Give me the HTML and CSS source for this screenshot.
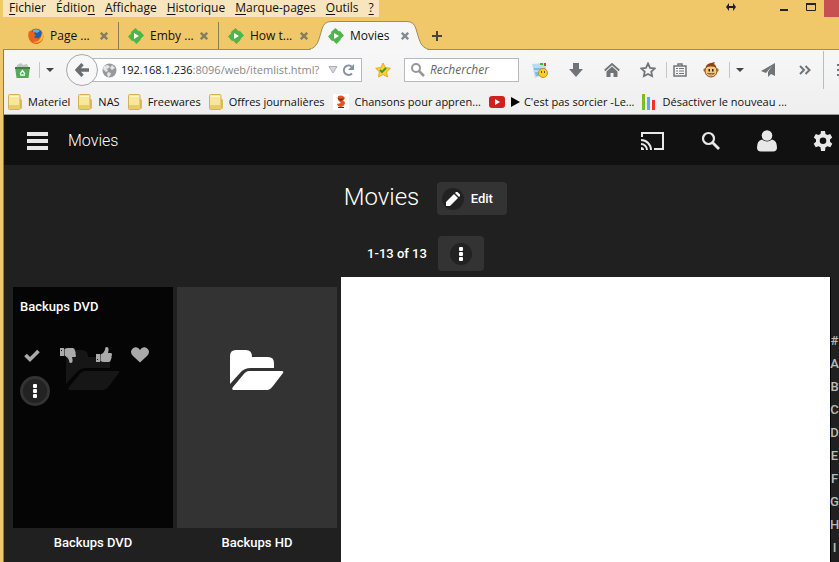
FILE: index.html
```
<!DOCTYPE html>
<html lang="fr">
<head>
  <meta charset="UTF-8">
  <meta name="viewport" content="width=device-width, initial-scale=1.0">
  <title>Movies</title>
  <link rel="stylesheet" href="styles.css">
</head>
<body>
  <svg class="defs" aria-hidden="true">
    <symbol id="emby" viewBox="0 0 16 16"><path fill="#4db648" d="M7.500 0L11 3.500l.8-.8L16 7.500l-3.500 3.500.2.800L8.500 16 5 12.500l-.8.8L0 8.500 3.500 5l-.8-.8z"/><path fill="#fff" d="M6 5l5 3-5 3z"/></symbol>
    <symbol id="cross" viewBox="0 0 8 8"><path stroke="currentColor" stroke-width="2.4" d="M.8.8l6.4 6.4M7.2.8L.8 7.2"/></symbol>
    <symbol id="folder-small" viewBox="0 0 14 16"><path fill="#dcbc4c" d="M11 5h1.500q1.500 0 1.500 1.500v7q0 1.500-2 1.500h-1z"/><path fill="#f7e79a" stroke="#d3b254" d="M.5 1.500q0-1 1-1h9.500q1 0 1 1v13q0 1-1 1h-9.500q-1 0-1-1z"/><path fill="#e8cd66" d="M1 11h10.500v4h-10.500z"/><path fill="#fff6c4" d="M2 2h9v1h-9z"/></symbol>
    <symbol id="folder" viewBox="0 0 54 40"><path d="M0 34V6Q0 0 6 0h10q6 0 6 7h16q6 0 6 6v5H21q-7 0-11 5z"/><path d="M19 21h33q2 0 1 2L43 36q-3 4-6 4H4q-3 0-1-3l10-12q3-4 6-4z"/></symbol>
    <symbol id="dots" viewBox="0 0 4 14"><rect width="4" height="4" rx="1" fill="#fff"/><rect y="5" width="4" height="4" rx="1" fill="#fff"/><rect y="10" width="4" height="4" rx="1" fill="#fff"/></symbol>
    <symbol id="thumb" viewBox="0 0 16 16"><path d="M0 7h4v8H0zM4.500 7.500Q8 6 9 3q0-3 1.500-3Q13 0 12.500 3.500L12 6h3q1 0 1 1.500 0 1-.6 1.500.6 1 0 2.300-.2 1-.6 1.400 0 2-1.800 2.300H8q-2 0-3.500-1z"/><path fill="#111" d="M1 12h1v1H1z"/></symbol>
  </svg>

  <header class="titlebar">
    <nav class="menubar">
      <button><u>F</u>ichier</button>
      <button>Éditio<u>n</u></button>
      <button><u>A</u>ffichage</button>
      <button><u>H</u>istorique</button>
      <button><u>M</u>arque-pages</button>
      <button><u>O</u>utils</button>
      <button><u>?</u></button>
    </nav>
    <div class="window-buttons">
      <svg class="resize" width="10" height="8" viewBox="0 0 10 8"><path fill="#222" d="M0 4l3-4v3h4V0l3 4-3 4V5H3v3z"/></svg>
      <button aria-label="Réduire"><svg class="minimize" width="8" height="2"><path fill="#222" d="M0 0h8v2H0z"/></svg></button>
      <button aria-label="Agrandir"><svg width="10" height="8"><path fill="none" stroke="#222" d="M.5 1v6.500h9V1"/><path fill="#222" d="M0 0h10v2H0z"/></svg></button>
      <button class="window-close" aria-label="Fermer"></button>
    </div>
  </header>

  <div class="tabs">
    <div class="tab">
      <svg class="favicon" viewBox="0 0 16 16"><circle cx="8" cy="8" r="7.500" fill="#e66a17"/><circle cx="8.500" cy="6.500" r="5.500" fill="#245fa6"/><path fill="#58b4e4" d="M5 2q4-2 7 1l-3 2-2-1-2 1z"/><path fill="#e8641b" d="M1 3l2 1q2-1 4 0L6 6l2 1-2 2q2 2 5 1 3-2 3-5 3 5-1 9-5 4-10 0Q-1 10 1 3z"/><path fill="#fbbd31" d="M14 4q3 5-1 9-4 3-8 1 5 0 7-3t2-7z"/></svg>
      <a href="#">Page ...</a>
      <button aria-label="Fermer l'onglet"><svg width="8" height="8"><use href="#cross"/></svg></button>
    </div>
    <div class="tab">
      <svg class="favicon"><use href="#emby"/></svg>
      <a href="#">Emby ...</a>
      <button aria-label="Fermer l'onglet"><svg width="8" height="8"><use href="#cross"/></svg></button>
    </div>
    <div class="tab">
      <svg class="favicon"><use href="#emby"/></svg>
      <a href="#">How t...</a>
      <button aria-label="Fermer l'onglet"><svg width="8" height="8"><use href="#cross"/></svg></button>
    </div>
    <div class="tab active">
      <svg class="tab-shape" viewBox="0 0 120 29"><path fill="#f6f6f6" stroke="#a48b4e" d="M-1 28.500Q7 28 10 18L13 8Q15 .5 22 .5h76q7 0 9 7.500l3 10q3 10 11 10.500"/><path stroke="#f6f6f6" stroke-width="2" d="M2 29h116"/></svg>
      <svg class="favicon"><use href="#emby"/></svg>
      <a href="#">Movies</a>
      <button aria-label="Fermer l'onglet"><svg width="8" height="8"><use href="#cross"/></svg></button>
    </div>
    <button class="new-tab" aria-label="Nouvel onglet"><svg width="10" height="10"><path fill="#444" d="M4 0h2v4h4v2H6v4H4V6H0V4h4z"/></svg></button>
  </div>

  <div class="browser">
    <div class="toolbar">
      <button class="tool recycle" aria-label="Nettoyer"><svg width="15" height="15" viewBox="0 0 15 15"><path fill="#bcc7bd" d="M2 2l4-2 2 2 4-1 2 4H1z"/><path fill="#55a85c" d="M0 4h15l-1.500 11h-12z"/><path fill="#3c8145" d="M0 4h15v2H0z"/><path fill="none" stroke="#e9ffe9" stroke-width="1.300" d="M5 11l2.500-3.500L10 11M5 12h5"/></svg></button>
      <i class="divider"></i>
      <button class="caret" aria-label="Options"><svg width="8" height="4"><path fill="#444" d="M0 0h8L4 4z"/></svg></button>
      <div class="location">
        <button class="back" aria-label="Précédent"><svg width="14" height="14"><path fill="none" stroke="#6b6e71" stroke-width="3.400" d="M7.500 1.200L2 7l5.500 5.800M2 7h12"/></svg></button>
        <div class="urlbar">
          <svg width="15" height="15" viewBox="0 0 15 15"><circle cx="7.500" cy="7.500" r="7" fill="#979a9c"/><path fill="#e4e5e6" d="M2 3l4-1 2 2-3 2 1 2-2 1-3-3zM10 2l3 3-3 2-2-2zM6 9l3 1-1 3-2 1-1-3z"/></svg>
          <a class="url" href="#"><b>192.168.1.236</b>:8096/web/itemlist.html?</a>
          <button aria-label="Historique"><svg width="10" height="8"><path fill="#d6d9dc" stroke="#a9b0b6" d="M1 .5h8L5 7z"/></svg></button>
          <button aria-label="Actualiser"><svg width="13" height="12"><path fill="none" stroke="#8491a0" stroke-width="2" d="M10 9.500A4.700 4.700 0 1 1 9.500 2.500"/><path fill="#8491a0" d="M12 0v6H6z"/></svg></button>
        </div>
      </div>
      <button class="tool bookmark" aria-label="Favori"><svg width="16" height="16" viewBox="0 0 16 16"><path fill="#ffd42e" stroke="#efa625" d="M8 1l2.200 4.600 5.100.7-3.700 3.500.9 5.100L8 12.500l-4.500 2.400.9-5.100L.7 6.300l5.100-.7z"/><path fill="none" stroke="#3c9d39" stroke-width="2" d="M5 8l2 2 4-4"/></svg></button>
      <label class="search">
        <svg width="14" height="14"><circle cx="5" cy="5" r="4" fill="none" stroke="#979797" stroke-width="2"/><path stroke="#979797" stroke-width="2.500" d="M8 8l5 5"/></svg>
        <input type="text" placeholder="Rechercher" aria-label="Rechercher">
      </label>
      <button class="tool first" aria-label="Images"><svg width="16" height="15"><path fill="#b9dcf4" d="M0 1l13-1 2 10-12 5z"/><path fill="#7fbbe6" d="M2 5l11 0v2H2zM3 9h6v4H4z"/><path fill="#e63c2d" d="M12 0h2v3h-2z"/><path fill="#46b53e" d="M8 0h3v2H8z"/><circle cx="11" cy="10" r="4.500" fill="#f4cf2a" stroke="#c69616"/><path fill="#6b5212" d="M9 8h1v2H9zM12 8h1v2h-1z"/></svg></button>
      <button class="tool" aria-label="Téléchargements"><svg width="14" height="14"><path fill="#717477" d="M4 0h6v6h4l-7 8-7-8h4z"/></svg></button>
      <button class="tool" aria-label="Accueil"><svg width="16" height="14"><path fill="none" stroke="#717477" stroke-width="1.800" d="M.7 7.500L8 1l7.300 6.500"/><path fill="#717477" d="M8 3.500l5.500 5V14h-4v-4h-3v4h-4V8.500z"/></svg></button>
      <button class="tool" aria-label="Marquer cette page"><svg width="16" height="16"><path fill="none" stroke="#717477" stroke-width="1.800" d="M8 1.500l2 4.300 4.700.6-3.400 3.200.8 4.600L8 12l-4.100 2.200.8-4.600-3.400-3.200 4.700-.6z"/></svg></button>
      <i class="divider"></i>
      <button class="tool narrow" aria-label="Liste des marque-pages"><svg width="14" height="14"><path fill="none" stroke="#717477" stroke-width="1.500" d="M1 3h12v10H1zM5 2.500V1h4v1.500"/><path fill="#717477" d="M3 5h2v1H3zM6 5h5v1H6zM3 7.500h2v1H3zM6 7.500h5v1H6zM3 10h2v1H3zM6 10h5v1H6z"/></svg></button>
      <button class="tool" aria-label="Greasemonkey"><svg width="16" height="16"><circle cx="2" cy="8" r="1.700" fill="#bd7420"/><circle cx="14" cy="8" r="1.700" fill="#bd7420"/><ellipse cx="8" cy="9" rx="6" ry="6" fill="#f3c77e" stroke="#8a4c16"/><path fill="#8a4310" d="M2.500 5.500q1-4 5.500-4.500l4-1-1 2q2 1 2.500 3.500-3-1.500-5.500-1-3-.5-5.500 1z"/><path fill="#25211b" d="M5.500 7H7v2.500H5.500zM9 7h1.500v2.500H9z"/><path fill="#fff2cc" stroke="#8a4c16" stroke-width=".8" d="M4.500 11.500h7q-3 3-7 0z"/></svg></button>
      <i class="divider"></i>
      <button class="caret" aria-label="Options"><svg width="8" height="4"><path fill="#444" d="M0 0h8L4 4z"/></svg></button>
      <button class="tool share" aria-label="Partager"><svg width="14" height="14"><path fill="#717477" d="M14 0v13l-4-2-3 3V9l4-6-6 7-5-2z"/></svg></button>
      <button class="tool" aria-label="Plus d'outils"><svg width="12" height="10"><path fill="none" stroke="#717477" stroke-width="2" d="M1 1l4 4-4 4M6.500 1l4 4-4 4"/></svg></button>
      <i class="divider tall"></i>
      <button class="burger" aria-label="Menu"><svg width="16" height="14"><path fill="#717477" d="M0 1h16v2H0zM0 6h16v2H0zM0 11h16v2H0z"/></svg></button>
    </div>

    <nav class="bookmarks">
      <a href="#"><svg width="14" height="16"><use href="#folder-small"/></svg>Materiel</a>
      <a href="#"><svg width="14" height="16"><use href="#folder-small"/></svg>NAS</a>
      <a href="#"><svg width="14" height="16"><use href="#folder-small"/></svg>Freewares</a>
      <a href="#"><svg width="14" height="16"><use href="#folder-small"/></svg>Offres journalières</a>
      <a href="#"><svg width="16" height="16"><path fill="#fff" d="M0 0h16v16H0z"/><path fill="#e2561b" d="M5 2q3-1 5 0l2 2-2 3q2 0 2 2-1 4-5 4-3-1-3-3l4-1-3-3z"/><path fill="#4a3428" d="M3 3l4 2 4-1-3 3zM5 13h6v1H5z"/></svg>Chansons pour appren...</a>
      <a href="#"><svg width="16" height="12"><rect width="16" height="12" rx="3" fill="#cf2020"/><path fill="#fff" d="M6 3l5 3-5 3z"/></svg><svg class="play" width="9" height="10"><path d="M0 0l9 5-9 5z"/></svg>C'est pas sorcier -Le...</a>
      <a href="#"><svg width="14" height="16"><path fill="#7cbc25" d="M0 0h3v16H0z"/><path fill="#4fb0f5" d="M5 3h3v13H5z"/><path fill="#f5302e" d="M10 6h3v10h-3z"/></svg>Désactiver le nouveau ...</a>
    </nav>

    <div class="app">
      <header class="app-header">
        <button aria-label="Menu"><svg width="22" height="18"><path fill="#e8e8e8" d="M0 0h21v4H0zM0 7h21v4H0zM0 14h21v4H0z"/></svg></button>
        <span class="app-title">Movies</span>
        <button class="push" aria-label="Caster"><svg width="24" height="19" viewBox="0 0 24 19"><path fill="none" stroke="#e8e8e8" stroke-width="2" d="M1 5V1h21v16H13M0 8a10 10 0 0 1 10 10M0 12a6 6 0 0 1 6 6"/><path fill="#e8e8e8" d="M0 15a3 3 0 0 1 3 3H0z"/></svg></button>
        <button aria-label="Rechercher"><svg width="20" height="20"><circle cx="7.500" cy="7.500" r="5.500" fill="none" stroke="#e8e8e8" stroke-width="2.200"/><path stroke="#e8e8e8" stroke-width="2.800" d="M11.500 11.500l6.500 6.500"/></svg></button>
        <button aria-label="Utilisateur"><svg width="20" height="22"><circle cx="10" cy="5.500" r="5.300" fill="#e8e8e8"/><path fill="#e8e8e8" d="M5 9.500q5 4 10 0 5 1 5 8 0 4-4 4H4q-4 0-4-4 0-7 5-8z"/></svg></button>
        <button aria-label="Paramètres"><svg width="20" height="20" viewBox="0 0 20 20"><path fill="#e8e8e8" fill-rule="evenodd" d="M8 0h4l.5 2.900 2 1.100 2.700-1 2 3.500-2.200 1.900v2.400l2.300 1.900-2 3.500-2.800-1-2 1.100L12 20H8l-.5-3.700-2-1.100-2.800 1-2-3.500L3 10.800V8.400L.8 6.500l2-3.500 2.700 1 2-1.100zM10 6.500a3.300 3.300 0 1 0 0 6.600 3.300 3.300 0 0 0 0-6.600z"/></svg></button>
      </header>

      <div class="heading">
        <h1>Movies</h1>
        <button class="edit"><span class="round"><svg width="14" height="14"><path fill="#fff" d="M0 14v-4l8-8 4 4-8 8zM9 1l1-1h1.500L14 2.500V4l-1 1z"/></svg></span>Edit</button>
      </div>
      <div class="paging">
        <span>1-13 of 13</span>
        <button class="more" aria-label="Plus"><span class="round"><svg width="4" height="14"><use href="#dots"/></svg></span></button>
      </div>

      <main class="items">
        <article class="card">
          <div class="poster hovered">
            <svg class="folder" viewBox="0 0 54 40"><use href="#folder"/></svg>
            <div class="overlay">
              <h2>Backups DVD</h2>
              <div class="actions">
                <button aria-label="Vu"><svg width="16" height="16"><path fill="none" stroke="#aaa" stroke-width="3.600" d="M1.500 8l4.500 4.500L14.500 4"/></svg></button>
                <button aria-label="Je n'aime pas"><svg class="down" width="16" height="16"><use href="#thumb"/></svg></button>
                <button aria-label="J'aime"><svg width="16" height="16"><use href="#thumb"/></svg></button>
                <button aria-label="Favori"><svg width="18" height="16"><path d="M9 15.500L2 9Q-1 6 .5 3 2 0 5 .3 7.500.5 9 3q1.500-2.500 4-2.700Q16 0 17.500 3 19 6 16 9z"/></svg></button>
                <button class="round menu" aria-label="Plus"><svg width="4" height="14"><use href="#dots"/></svg></button>
              </div>
            </div>
          </div>
          <p>Backups DVD</p>
        </article>
        <article class="card">
          <div class="poster">
            <svg class="folder" viewBox="0 0 54 40"><use href="#folder"/></svg>
          </div>
          <p>Backups HD</p>
        </article>
        <div class="blank"></div>
        <nav class="alphabet">
          <a href="#">#</a>
          <a href="#">A</a>
          <a href="#">B</a>
          <a href="#">C</a>
          <a href="#">D</a>
          <a href="#">E</a>
          <a href="#">F</a>
          <a href="#">G</a>
          <a href="#">H</a>
          <a href="#">I</a>
        </nav>
      </main>
    </div>
  </div>
</body>
</html>
```

FILE: styles.css
```
* { box-sizing: border-box; }
body {
  margin: 0;
  padding-left: 3px;
  height: 100vh;
  display: flex;
  flex-direction: column;
  overflow: hidden;
  background: #f0c869;
  color: #111;
  font: 12px/16px "Segoe UI", "Open Sans", sans-serif;
}
button {
  display: flex;
  align-items: center;
  justify-content: center;
  flex: none;
  padding: 0;
  border: 0;
  background: none;
  color: inherit;
  font: inherit;
}
a { color: inherit; text-decoration: none; white-space: nowrap; }
svg { display: block; flex: none; }
.defs { position: absolute; width: 0; height: 0; }

/* title bar */
.titlebar {
  display: flex;
  justify-content: space-between;
  height: 17px;
}
.menubar {
  display: flex;
  gap: 10px;
  padding: 0 5px 0 6px;
  background: #f8e5bd;
}
.menubar button { height: 16px; line-height: 16px; }
.menubar u { text-underline-offset: 2px; }
.window-buttons { display: flex; }
.window-buttons button { width: 27px; height: 14px; }
.window-buttons .resize { margin: 3px 34px 0 0; }
.minimize { margin-top: 6px; }
.window-buttons .window-close { width: 15px; height: 17px; background: #c75050; }

/* tabs */
.tabs {
  display: flex;
  height: 33px;
  padding: 5px 0 0 16px;
  border-bottom: 1px solid #a48b4e;
}
.tab {
  position: relative;
  display: flex;
  align-items: center;
  width: 100px;
  padding: 1px 10px 0 9px;
  border-right: 1px solid #8f7c50;
  color: #111;
}
.tab:nth-child(3) { border-color: transparent; }
.tab a { flex: 1; margin-left: 6px; }
.tab button { color: #857d62; }
.tab > * { position: relative; }
.favicon { width: 16px; height: 16px; }
.tab.active { border: 0; }
.tab.active button { color: #848b94; }
.tab .tab-shape {
  position: absolute;
  left: -10px;
  bottom: -1px;
  width: 120px;
  height: 29px;
}
.new-tab { margin-left: 8px; width: 20px; }

/* toolbar */
.browser {
  flex: 1;
  display: flex;
  flex-direction: column;
  min-height: 0;
  border-left: 1px solid #8f7a45;
  background: linear-gradient(#f7f7f7, #efefef 60px);
}
.toolbar {
  display: flex;
  align-items: center;
  height: 40px;
  padding-left: 6px;
}
.tool { width: 36px; height: 24px; }
.tool.recycle { width: 24px; margin-right: 5px; }
.tool.narrow { width: 26px; }
.tool.first { margin-left: 3px; }
.tool.share { width: 38px; }
.tool.bookmark { width: 42px; }
.divider { width: 1px; height: 16px; background: #c4c6c8; }
.divider.tall { height: 38px; background: #b5bdc6; }
.caret { width: 19px; height: 24px; }
.burger { width: 15px; justify-content: flex-start; padding-left: 13px; overflow: hidden; }
.location {
  flex: 1;
  display: flex;
  align-items: center;
  min-width: 0;
  margin-left: 7px;
}
.back {
  z-index: 1;
  width: 32px;
  height: 32px;
  border: 1px solid #a5a7a9;
  border-radius: 50%;
  background: #f7f7f7;
}
.urlbar {
  flex: 1;
  display: flex;
  align-items: center;
  gap: 4px;
  height: 24px;
  min-width: 0;
  margin-left: -8px;
  padding: 0 6px 0 11px;
  border: 1px solid #b4bac1;
  background: #fff;
}
.url {
  flex: 1;
  min-width: 0;
  overflow: hidden;
  color: #888;
  font-size: 11px;
}
.url b { color: #111; font-weight: normal; }
.search {
  display: flex;
  align-items: center;
  gap: 5px;
  width: 115px;
  height: 24px;
  padding: 0 6px;
  border: 1px solid #b4bac1;
  background: #fff;
}
.search input {
  width: 100%;
  min-width: 0;
  padding: 0;
  border: 0;
  background: none;
  font: inherit;
}
.search input::placeholder { color: #666; font-style: italic; opacity: 1; }

/* bookmarks */
.bookmarks {
  display: flex;
  gap: 8px;
  height: 25px;
  padding: 0 4px;
  border-bottom: 1px solid #999;
  font-size: 11px;
}
.bookmarks a { display: flex; align-items: center; gap: 6px; height: 24px; }
.bookmarks .play { margin-right: -2px; }

/* media app */
.app {
  flex: 1;
  display: flex;
  flex-direction: column;
  min-height: 0;
  background: #202020;
  color: #fff;
  font: 500 13px/20px Roboto, sans-serif;
}
.app-header {
  display: flex;
  align-items: center;
  gap: 36px;
  height: 50px;
  padding: 2px 6px 0 23px;
  background: #111;
}
.app-title {
  margin-left: -17px;
  font-size: 16px;
  font-weight: 300;
}
.push { margin-left: auto; }
.heading, .paging {
  display: flex;
  align-items: center;
  justify-content: center;
  padding-left: 8px;
}
.heading { gap: 18px; margin-top: 17px; }
.heading h1 {
  margin: 0;
  padding-bottom: 2px;
  font-size: 24px;
  font-weight: 300;
  line-height: 31px;
}
.round {
  display: flex;
  align-items: center;
  justify-content: center;
  width: 22px;
  height: 22px;
  border-radius: 50%;
  background: #222;
}
.edit {
  gap: 7px;
  width: 70px;
  height: 33px;
  padding-right: 10px;
  border-radius: 4px;
  background: #333;
}
.paging { gap: 11px; margin-top: 21px; }
.more {
  width: 46px;
  height: 35px;
  border-radius: 4px;
  background: #333;
}
.items {
  flex: 1;
  display: flex;
  gap: 4px;
  min-height: 0;
  margin-top: 6px;
  padding-left: 9px;
}
.card {
  width: 160px;
  padding-top: 10px;
  text-align: center;
}
.card p { margin: 5px 0 0; }
.poster {
  position: relative;
  height: 241px;
  padding-top: 63px;
  background: #333;
}
.poster.hovered { background: #050505; }
.folder {
  width: 54px;
  height: 40px;
  margin: 0 auto;
  fill: #fff;
}
.hovered .folder { fill: #161616; }
.overlay {
  position: absolute;
  inset: 0;
  padding: 10px 7px;
  text-align: left;
}
.overlay h2 { margin: 0; font: inherit; }
.actions {
  display: flex;
  flex-wrap: wrap;
  row-gap: 6px;
  margin-top: 23px;
  fill: #aaa;
}
.actions button { width: 36px; height: 30px; padding-right: 12px; }
.actions .down { transform: rotate(180deg) scaleX(-1); }
.actions .menu {
  width: 30px;
  padding: 0;
  border: 3px solid #333;
}
.blank {
  flex: 1;
  border-right: 1px solid #000;
  background: #fff;
}
.alphabet {
  display: flex;
  flex-direction: column;
  width: 9px;
  margin-left: -5px;
  padding-top: 52px;
  align-items: center;
  color: #bbb;
}
.alphabet a { line-height: 23px; }
```
